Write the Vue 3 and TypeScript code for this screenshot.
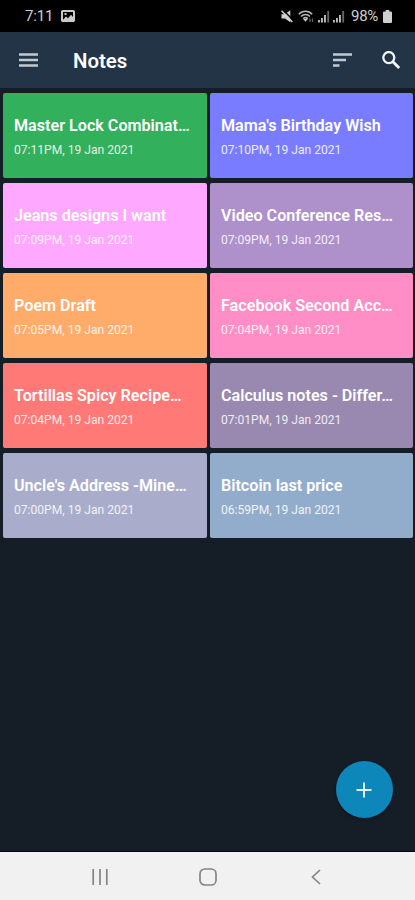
<script setup lang="ts">
interface Note {
  title: string
  time: string
  tone: string
}

const notes: Note[] = [
  { title: 'Master Lock Combinat…', time: '07:11PM, 19 Jan 2021', tone: 'green' },
  { title: "Mama's Birthday Wish", time: '07:10PM, 19 Jan 2021', tone: 'indigo' },
  { title: 'Jeans designs I want', time: '07:09PM, 19 Jan 2021', tone: 'pink' },
  { title: 'Video Conference Res…', time: '07:09PM, 19 Jan 2021', tone: 'purple' },
  { title: 'Poem Draft', time: '07:05PM, 19 Jan 2021', tone: 'orange' },
  { title: 'Facebook Second Acc…', time: '07:04PM, 19 Jan 2021', tone: 'rose' },
  { title: 'Tortillas Spicy Recipe…', time: '07:04PM, 19 Jan 2021', tone: 'red' },
  { title: 'Calculus notes - Differ…', time: '07:01PM, 19 Jan 2021', tone: 'plum' },
  { title: "Uncle's Address -Mine…", time: '07:00PM, 19 Jan 2021', tone: 'lavender' },
  { title: 'Bitcoin last price', time: '06:59PM, 19 Jan 2021', tone: 'blue' },
]
</script>

<template>
  <div class="phone">
    <div class="status">
      <span class="clock">7:11</span>
      <svg class="photo" width="14" height="12" viewBox="0 0 14 12">
        <path fill="#c9c9c9" fill-rule="evenodd" d="M1.8 0h10.4C13.200 0 14 .8 14 1.800v8.400c0 1-.8 1.800-1.800 1.800H1.800C.8 12 0 11.200 0 10.200V1.800C0 .8.8 0 1.800 0zM2 2v7.800l3-3.200 2 1.600 3-3.400 2 2.300V2zM3.500 3h2v2h-2z" />
      </svg>
      <div class="signals">
        <svg width="12" height="13" viewBox="0 0 12 13">
          <path fill="#d0d0d0" d="M.5 4.300h3.200L9.300.2v12L4 8.600H.5z" />
          <path stroke="#000" stroke-width="1.500" d="M1.800-.4l11 11.400" />
          <path stroke="#d0d0d0" stroke-width="1.600" d="M.5.700l10.800 11.300" />
        </svg>
        <svg class="wifi" width="16" height="13" viewBox="0 0 16 13" fill="none">
          <path stroke="#b8b8b8" stroke-width="1.500" d="M.8 4.200C4.500.2 10.500.2 14.200 4.200M3 6.500c2.600-2.700 6.400-2.700 9 0M5.200 8.600c1.500-1.300 3.100-1.300 4.600 0" />
          <path fill="#c8c8c8" d="M5.200 9h4.600l-2.300 2.800z" />
          <path stroke="#666" stroke-width="1.200" d="M12 8.500v3.500M14.500 8.500v3.500" />
        </svg>
        <svg v-for="n in 2" :key="n" class="bars" width="12" height="13" viewBox="0 0 12 13">
          <path fill="#bcbcbc" d="M0 10h1.900v2.500H0zM3 8h1.900v4.500H3zM6 5h1.900v7.500H6z" />
          <path fill="#686868" d="M9.300 1h1.800v11.500H9.300z" />
        </svg>
        <span class="percent">98%</span>
        <svg class="battery" width="9" height="13" viewBox="0 0 9 13">
          <path fill="#d0d0d0" d="M2.700 0h3.600v1.500h1.400c.7 0 1.300.5 1.300 1.200v9c0 .8-.6 1.300-1.300 1.300H1.300C.6 13 0 12.500 0 11.700v-9c0-.7.6-1.200 1.300-1.200h1.400z" />
        </svg>
      </div>
    </div>

    <header class="bar">
      <svg class="menu" width="19" height="14" viewBox="0 0 19 14">
        <path fill="#c1cad2" d="M0 .3h19v2.400H0zM0 5.800h19v2.400H0zM0 11.300h19v2.400H0z" />
      </svg>
      <h1>Notes</h1>
      <svg class="sort" width="19" height="14" viewBox="0 0 19 14">
        <path fill="#c1cad2" d="M0 .3h19v2.400H0zM0 5.800h13v2.400H0zM0 11.300h6.500v2.400H0z" />
      </svg>
      <svg class="search" width="19" height="19" viewBox="0 0 19 19" fill="none" stroke="#f1f5f8">
        <circle cx="6.800" cy="6.600" r="5.500" stroke-width="2.300" />
        <path stroke-width="2.900" d="M10.900 10.700l6.300 6.300" />
      </svg>
    </header>

    <main class="content">
      <div class="grid">
        <article v-for="note in notes" :key="note.title" class="card" :class="note.tone">
          <h2>{{ note.title }}</h2>
          <p>{{ note.time }}</p>
        </article>
      </div>
      <button class="fab" aria-label="Add note">
        <svg width="16" height="16" viewBox="0 0 16 16">
          <path stroke="#dcf3fb" stroke-width="2" d="M8 .5v15M.5 8h15" />
        </svg>
      </button>
    </main>

    <nav class="nav">
      <svg width="16" height="16" viewBox="0 0 16 16">
        <path stroke="#858585" stroke-width="1.700" d="M1.200 0v16M8 0v16M14.800 0v16" />
      </svg>
      <svg class="home" width="18" height="18" viewBox="0 0 18 18" fill="none">
        <rect x="1" y="1" width="16" height="16" rx="4.800" stroke="#858585" stroke-width="1.700" />
      </svg>
      <svg class="back" width="10" height="16" viewBox="0 0 10 16" fill="none">
        <path stroke="#858585" stroke-width="1.700" d="M9 1L1.500 8 9 15" />
      </svg>
    </nav>
  </div>
</template>

<style>
body {
  background: #151d26;
}
</style>

<style scoped>
.phone {
  display: flex;
  flex-direction: column;
  width: 415px;
  height: 900px;
  overflow: hidden;
  background: #151d26;
  font-family: Roboto, "Liberation Sans", sans-serif;
}

.status {
  display: flex;
  align-items: center;
  box-sizing: border-box;
  height: 32px;
  padding: 0 23px 0 25px;
  background: #000;
  color: #cfcfcf;
  font-size: 15px;
}

.clock {
  width: 36px;
  letter-spacing: -0.200px;
}

.signals {
  display: flex;
  align-items: center;
  margin-left: auto;
}

.wifi {
  margin-left: 5px;
}

.bars {
  margin-left: 4px;
}

.bars + .bars {
  margin-left: 3px;
}

.percent {
  margin-left: 6px;
  width: 29px;
  font-size: 15px;
  letter-spacing: -0.300px;
}

.battery {
  margin-left: 3px;
}

.bar {
  display: flex;
  align-items: center;
  box-sizing: border-box;
  height: 56px;
  padding: 0 14px 0 19px;
  background: #233447;
}

.bar h1 {
  flex: 1;
  margin: 1px 0 0 35px;
  color: #fff;
  font-size: 20.400px;
  font-weight: 600;
  line-height: 24px;
}

.search {
  margin-left: 30px;
}

.content {
  flex: 1;
  display: flex;
  flex-direction: column;
  justify-content: space-between;
  padding: 5px 2px 34px 3px;
}

.grid {
  display: grid;
  grid-template-columns: 203.500px 203px;
  grid-auto-rows: 85px;
  gap: 5px 3.500px;
}

.card {
  box-sizing: border-box;
  padding: 23px 10px 0 11px;
  border-radius: 2px;
  color: #fff;
  white-space: nowrap;
  overflow: hidden;
}

.card h2 {
  margin: 0;
  font-size: 16.150px;
  font-weight: 600;
  line-height: 20px;
}

.card p {
  margin: 6px 0 0;
  font-size: 12.100px;
  line-height: 16px;
  opacity: 0.85;
}

.green { background: #32b05b; }
.indigo { background: #7a7cff; }
.pink { background: #ffa8ff; }
.purple { background: #ae90cb; }
.orange { background: #ffac6a; }
.rose { background: #ff8dc6; }
.red { background: #ff7977; }
.plum { background: #9988b0; }
.lavender { background: #a9adcb; }
.blue { background: #92adcc; }

.fab {
  display: flex;
  align-items: center;
  justify-content: center;
  align-self: flex-end;
  width: 57px;
  height: 57px;
  margin-right: 20.500px;
  padding: 0;
  border: 0;
  border-radius: 50%;
  background: #0d86b9;
  box-shadow: 0 1px 3px rgba(0, 0, 0, 0.300);
}

.nav {
  display: flex;
  align-items: center;
  box-sizing: border-box;
  height: 48px;
  padding: 1px 0 0 92px;
  background: #f1f1f1;
  box-shadow: 0 -1px 0 #05060f;
}

.home {
  margin-left: 91px;
}

.back {
  margin-left: 94px;
}
</style>
